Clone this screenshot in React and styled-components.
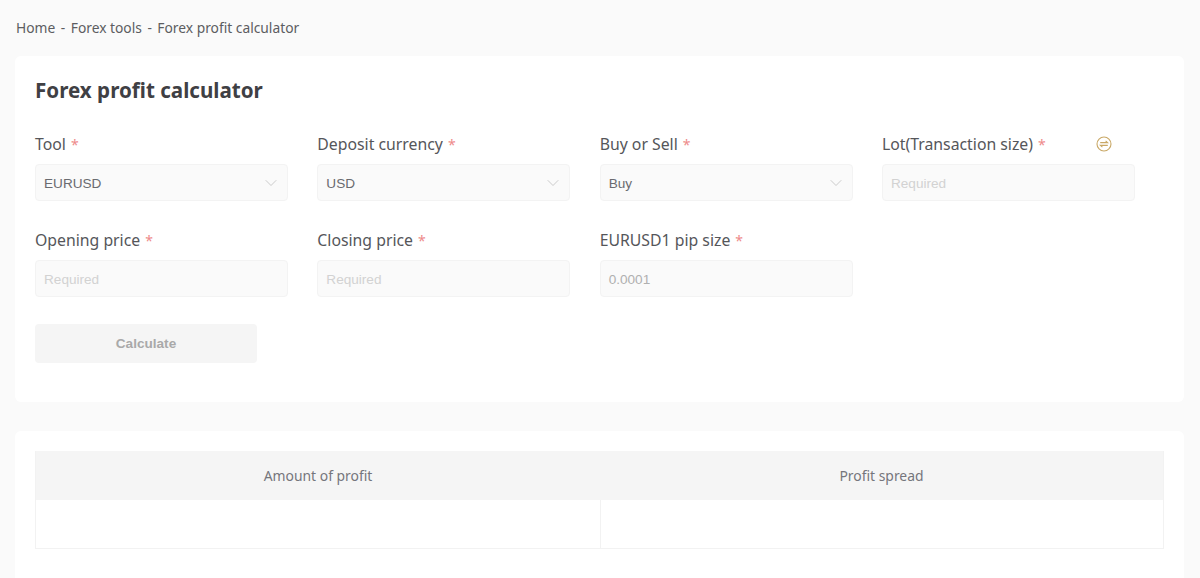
import React from "react";
import styled, { createGlobalStyle } from "styled-components";
import { ChevronDown } from "lucide-react";

const GlobalStyle = createGlobalStyle`
  html, body {
    margin: 0;
    padding: 0;
    background: #fafafa;
    overflow: hidden;
  }
  * {
    box-sizing: border-box;
  }
`;

const Page = styled.div`
  width: 1200px;
  height: 578px;
  padding: 0 16px 0 15px;
  overflow: hidden;
  font-family: "Noto Sans", "Liberation Sans", sans-serif;
  color: #4a4a4f;
`;

const Breadcrumb = styled.nav`
  display: flex;
  align-items: center;
  gap: 5.5px;
  height: 56px;
  padding-left: 1px;
  padding-bottom: 1px;
  font-size: 13.8px;
  color: #5c5d61;
`;

const Card = styled.section`
  background: #fff;
  border-radius: 6px;
  padding: ${(p) => p.$padding};
  margin-bottom: 29px;
`;

const Title = styled.h1`
  margin: 0 0 28px;
  height: 32px;
  line-height: 32px;
  font-size: 20.6px;
  font-weight: 700;
  color: #3f4044;
`;

const FormGrid = styled.div`
  display: grid;
  grid-template-columns: repeat(4, 253px);
  column-gap: 29.33px;
  row-gap: 29px;
`;

const Field = styled.div`
  display: flex;
  flex-direction: column;
`;

const LabelRow = styled.div`
  display: flex;
  align-items: center;
  justify-content: space-between;
  height: 24px;
  margin-bottom: 9px;
  margin-top: -2px;
`;

const Label = styled.label`
  font-size: 15.8px;
  color: #55565a;
  white-space: nowrap;
`;

const Star = styled.span`
  color: #ee8a8a;
  margin-left: 5px;
  font-size: 14px;
`;

const SwapButton = styled.span`
  display: flex;
  margin-right: 23px;
`;

const Control = styled.div`
  display: flex;
  align-items: center;
  justify-content: space-between;
  height: 37px;
  margin-top: -1px;
  padding: 1px 6px 0 8px;
  background: #fafafa;
  border: 1px solid #f3f3f3;
  border-radius: 4px;
  font-family: "Liberation Sans", Arial, sans-serif;
  font-size: 13.6px;
  color: ${(p) => (p.$muted ? "#b0b0b0" : p.$placeholder ? "#d2d2d2" : "#6a6b70")};
  svg {
    color: #c2c2c2;
  }
`;

const CalculateButton = styled.button`
  display: block;
  width: 222px;
  height: 39px;
  margin-top: 27px;
  border: none;
  border-radius: 4px;
  background: #f5f5f5;
  color: #a9a9a9;
  font-family: "Liberation Sans", Arial, sans-serif;
  font-size: 13.6px;
  font-weight: 700;
`;

const ResultTable = styled.div`
  display: grid;
  grid-template-columns: 564px 1fr;
  grid-template-rows: 49px 48px;
  border: 1px solid #f2f2f2;
  border-top: none;
`;

const HeadCell = styled.div`
  display: flex;
  align-items: center;
  justify-content: center;
  background: #f5f5f5;
  font-size: 13.9px;
  color: #75767c;
`;

const BodyCell = styled.div`
  border-left: ${(p) => (p.$divided ? "1px solid #f2f2f2" : "none")};
`;

const SwapIcon = () => (
  <svg width="16" height="16" viewBox="0 0 16 16" fill="none" stroke="#c9a866" strokeWidth="1.1">
    <circle cx="8" cy="8" r="7" />
    <path d="M4.2 6.6h7.4L9.6 4.8M11.8 9.4H4.4l2 1.8" />
  </svg>
);

const fields = [
  { label: "Tool", value: "EURUSD", select: true },
  { label: "Deposit currency", value: "USD", select: true },
  { label: "Buy or Sell", value: "Buy", select: true },
  { label: "Lot(Transaction size)", value: "Required", placeholder: true, swap: true },
  { label: "Opening price", value: "Required", placeholder: true },
  { label: "Closing price", value: "Required", placeholder: true },
  { label: "EURUSD1 pip size", value: "0.0001", muted: true },
];

export default function App() {
  return (
    <Page>
      <GlobalStyle />
      <Breadcrumb>
        <span>Home</span>
        <span>-</span>
        <span>Forex tools</span>
        <span>-</span>
        <span>Forex profit calculator</span>
      </Breadcrumb>

      <Card $padding="18px 20px 39px">
        <Title>Forex profit calculator</Title>
        <FormGrid>
          {fields.map((field) => (
            <Field key={field.label}>
              <LabelRow>
                <Label>
                  {field.label}
                  <Star>*</Star>
                </Label>
                {field.swap && (
                  <SwapButton>
                    <SwapIcon />
                  </SwapButton>
                )}
              </LabelRow>
              <Control $placeholder={field.placeholder} $muted={field.muted}>
                {field.value}
                {field.select && <ChevronDown size={20} strokeWidth={1} />}
              </Control>
            </Field>
          ))}
        </FormGrid>
        <CalculateButton disabled>Calculate</CalculateButton>
      </Card>

      <Card $padding="20px 20px 40px">
        <ResultTable>
          <HeadCell>Amount of profit</HeadCell>
          <HeadCell>Profit spread</HeadCell>
          <BodyCell />
          <BodyCell $divided />
        </ResultTable>
      </Card>
    </Page>
  );
}
